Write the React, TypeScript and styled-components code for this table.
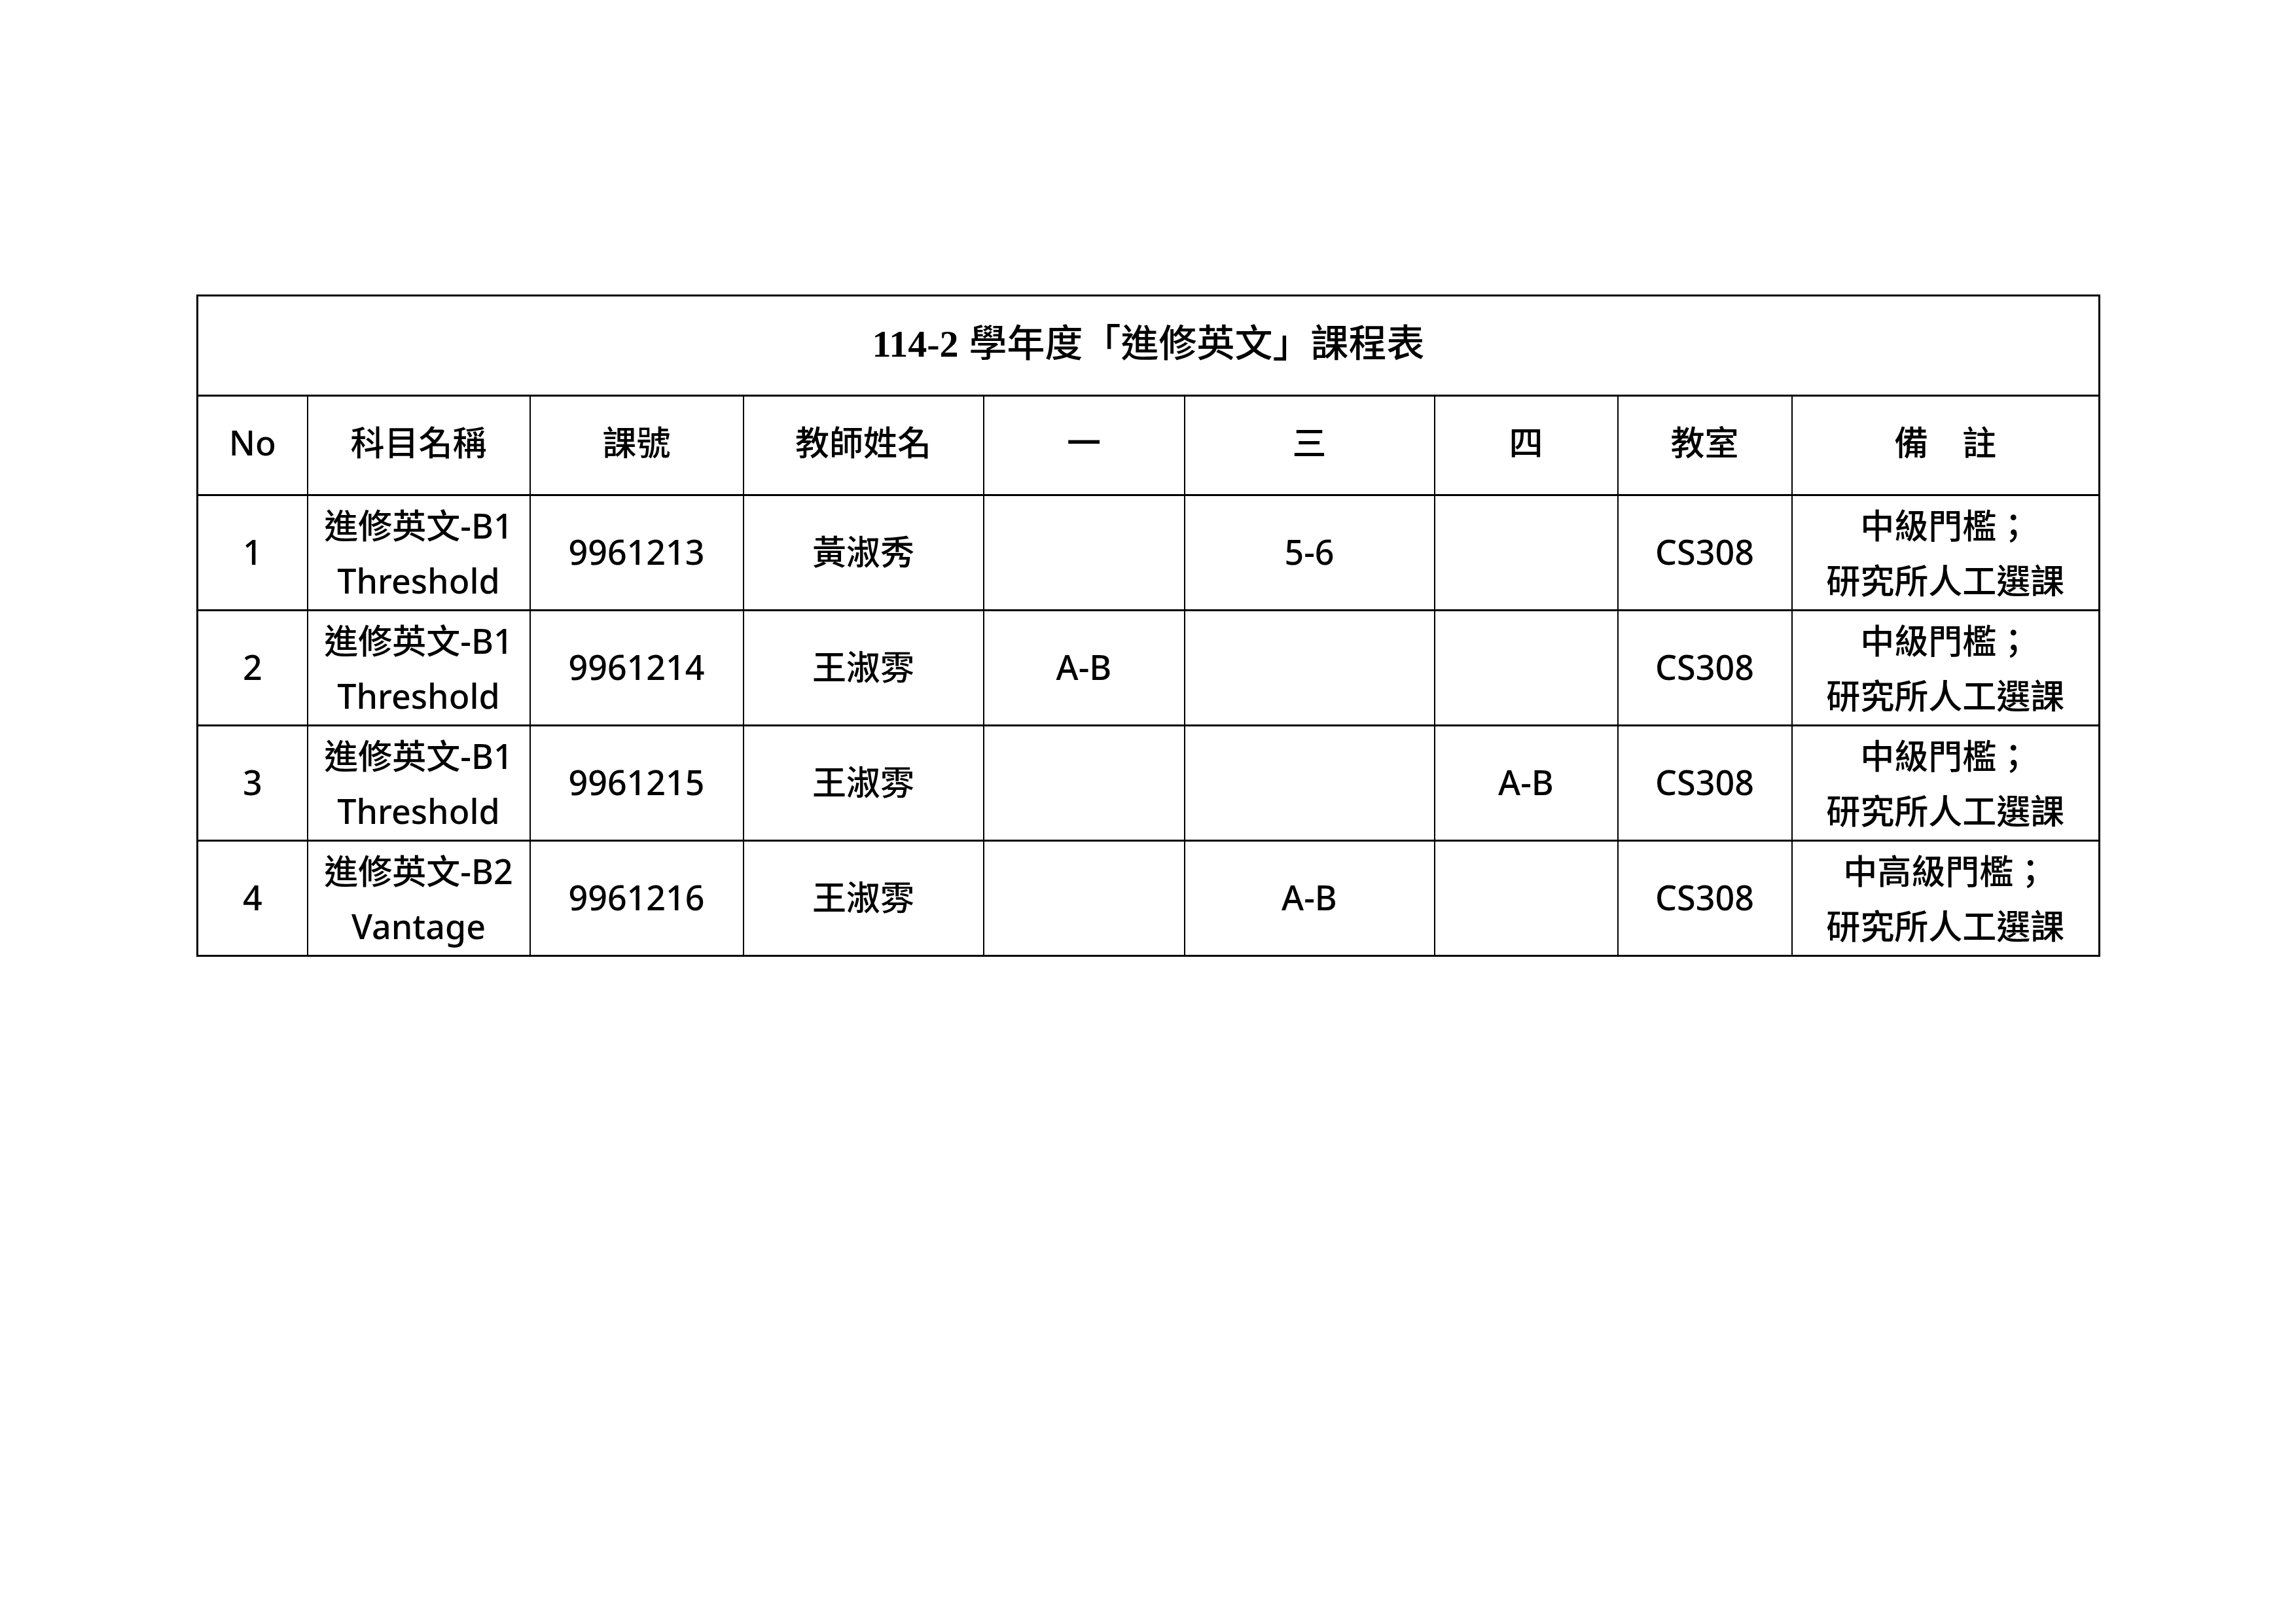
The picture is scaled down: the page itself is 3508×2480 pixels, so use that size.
import React from 'react';
import styled, { createGlobalStyle } from 'styled-components';

interface CourseRow {
  no: string;
  subject: [string, string];
  code: string;
  teacher: string;
  mon: string;
  wed: string;
  thu: string;
  room: string;
  note: [string, string];
}

const rows: CourseRow[] = [
  { no: '1', subject: ['進修英文-B1', 'Threshold'], code: '9961213', teacher: '黃淑秀', mon: '', wed: '5-6', thu: '', room: 'CS308', note: ['中級門檻；', '研究所人工選課'] },
  { no: '2', subject: ['進修英文-B1', 'Threshold'], code: '9961214', teacher: '王淑雰', mon: 'A-B', wed: '', thu: '', room: 'CS308', note: ['中級門檻；', '研究所人工選課'] },
  { no: '3', subject: ['進修英文-B1', 'Threshold'], code: '9961215', teacher: '王淑雰', mon: '', wed: '', thu: 'A-B', room: 'CS308', note: ['中級門檻；', '研究所人工選課'] },
  { no: '4', subject: ['進修英文-B2', 'Vantage'], code: '9961216', teacher: '王淑雰', mon: '', wed: 'A-B', thu: '', room: 'CS308', note: ['中高級門檻；', '研究所人工選課'] },
];

const columnWidths = [168, 340, 326, 367, 307, 382, 280, 266, 470];
const headers = ['No', '科目名稱', '課號', '教師姓名', '一', '三', '四', '教室', '備　註'];

const GlobalStyle = createGlobalStyle`
  html, body {
    margin: 0;
    padding: 0;
    background: #ffffff;
  }
`;

const Page = styled.div`
  width: 3508px;
  height: 2480px;
  box-sizing: border-box;
  padding: 450px 0 0 300px;
  background: #ffffff;
  font-family: "Noto Sans", "Noto Sans CJK TC", sans-serif;
  color: #000000;
`;

const Table = styled.table`
  width: 2906px;
  table-layout: fixed;
  border-collapse: collapse;
  border: 3px solid #000000;
`;

const TitleCell = styled.td`
  height: 153px;
  padding: 0 0 10px 0;
  box-sizing: border-box;
  text-align: center;
  vertical-align: middle;
  border-bottom: 3px solid #000000;
  font-family: "Noto Sans CJK TC", sans-serif;
  font-size: 58px;
  font-weight: 500;
  line-height: 1;
`;

const TitleNumber = styled.span`
  font-family: "Liberation Serif", "Noto Sans CJK TC", serif;
  font-weight: 700;
  font-size: 58px;
  margin-right: 16px;
`;

const HeaderRow = styled.tr`
  height: 152px;
`;

const DataRow = styled.tr`
  height: 176px;
`;

const Cell = styled.td<{ $lift?: number }>`
  padding: 0 0 ${p => p.$lift ?? 0}px 0;
  box-sizing: border-box;
  text-align: center;
  vertical-align: middle;
  border: 2px solid #000000;
  border-top-width: 3px;
  font-size: 52px;
  font-weight: 500;
  line-height: 84px;
  white-space: nowrap;
`;

const Line = styled.div`
  display: block;
`;

const App: React.FC = () => {
  return (
    <Page>
      <GlobalStyle />
      <Table>
        <colgroup>
          {columnWidths.map((w, i) => (
            <col key={i} style={{ width: w }} />
          ))}
        </colgroup>
        <tbody>
          <tr>
            <TitleCell colSpan={9}>
              <TitleNumber>114-2</TitleNumber>學年度「進修英文」課程表
            </TitleCell>
          </tr>
          <HeaderRow>
            {headers.map(h => (
              <Cell key={h} $lift={10}>{h}</Cell>
            ))}
          </HeaderRow>
          {rows.map(row => (
            <DataRow key={row.no}>
              <Cell $lift={4}>{row.no}</Cell>
              <Cell>
                <Line>{row.subject[0]}</Line>
                <Line>{row.subject[1]}</Line>
              </Cell>
              <Cell $lift={4}>{row.code}</Cell>
              <Cell $lift={4}>{row.teacher}</Cell>
              <Cell $lift={4}>{row.mon}</Cell>
              <Cell $lift={4}>{row.wed}</Cell>
              <Cell $lift={4}>{row.thu}</Cell>
              <Cell $lift={4}>{row.room}</Cell>
              <Cell>
                <Line>{row.note[0]}</Line>
                <Line>{row.note[1]}</Line>
              </Cell>
            </DataRow>
          ))}
        </tbody>
      </Table>
    </Page>
  );
};

export default App;
